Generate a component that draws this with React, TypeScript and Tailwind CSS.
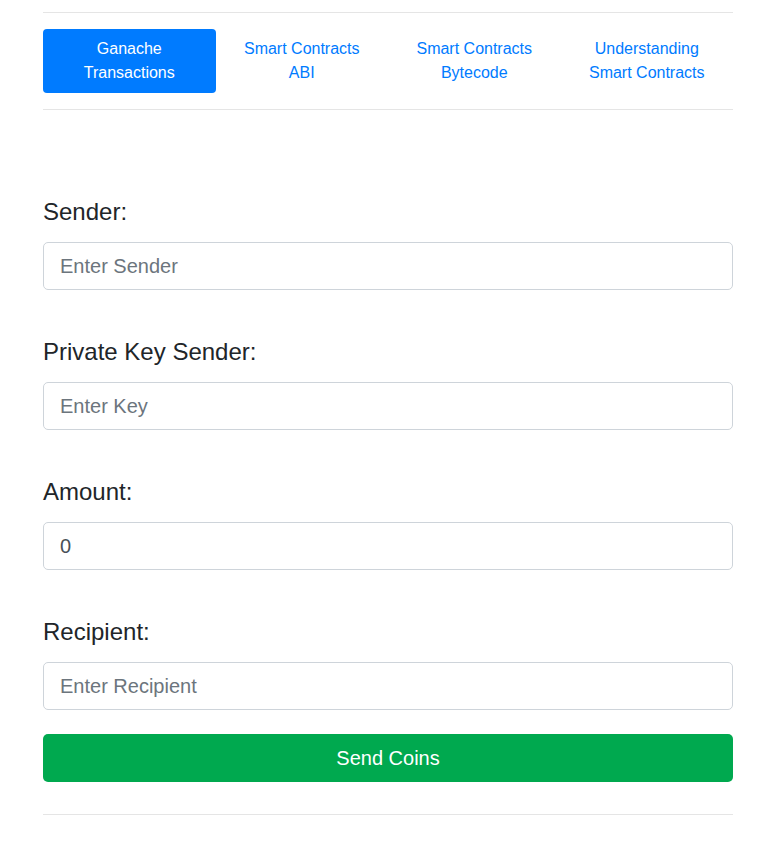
import React from "react";

const tabs = [
  ["Ganache", "Transactions"],
  ["Smart Contracts", "ABI"],
  ["Smart Contracts", "Bytecode"],
  ["Understanding", "Smart Contracts"],
];

function Field({ label, placeholder, value, first }: { label: string; placeholder?: string; value?: string; first?: boolean }) {
  return (
    <div className={first ? "mt-[87px]" : "mt-[47px]"}>
      <div className="text-2xl leading-[29px] mb-4 text-[#212529]">{label}</div>
      <input
        className="block w-full h-[48px] px-4 text-xl border border-[#ced4da] rounded-[5px] text-[#495057] placeholder:text-[#6c757d] outline-none bg-white"
        placeholder={placeholder}
        defaultValue={value}
      />
    </div>
  );
}

export default function App() {
  return (
    <div className="bg-white min-h-[861px] w-full" style={{ fontFamily: '"Liberation Sans", Arial, sans-serif' }}>
      <div className="mx-[43px] w-[690px] pt-[12px]">
        <div className="h-px bg-[#e5e5e5]" />
        <div className="grid grid-cols-4 my-4">
          {tabs.map((t, i) => (
            <div
              key={i}
              className={
                "h-[64px] py-2 rounded text-base leading-6 text-center flex flex-col items-center justify-center " +
                (i === 0 ? "bg-[#007bff] text-white" : "text-[#007bff]")
              }
            >
              <span>{t[0]}</span>
              <span>{t[1]}</span>
            </div>
          ))}
        </div>
        <div className="h-px bg-[#e5e5e5]" />
        <Field label="Sender:" placeholder="Enter Sender" first />
        <Field label="Private Key Sender:" placeholder="Enter Key" />
        <Field label="Amount:" value="0" />
        <Field label="Recipient:" placeholder="Enter Recipient" />
        <button className="mt-6 w-full h-[48px] rounded-[5px] bg-[#00a94f] text-white text-xl">Send Coins</button>
        <div className="mt-8 h-px bg-[#e5e5e5]" />
      </div>
    </div>
  );
}
